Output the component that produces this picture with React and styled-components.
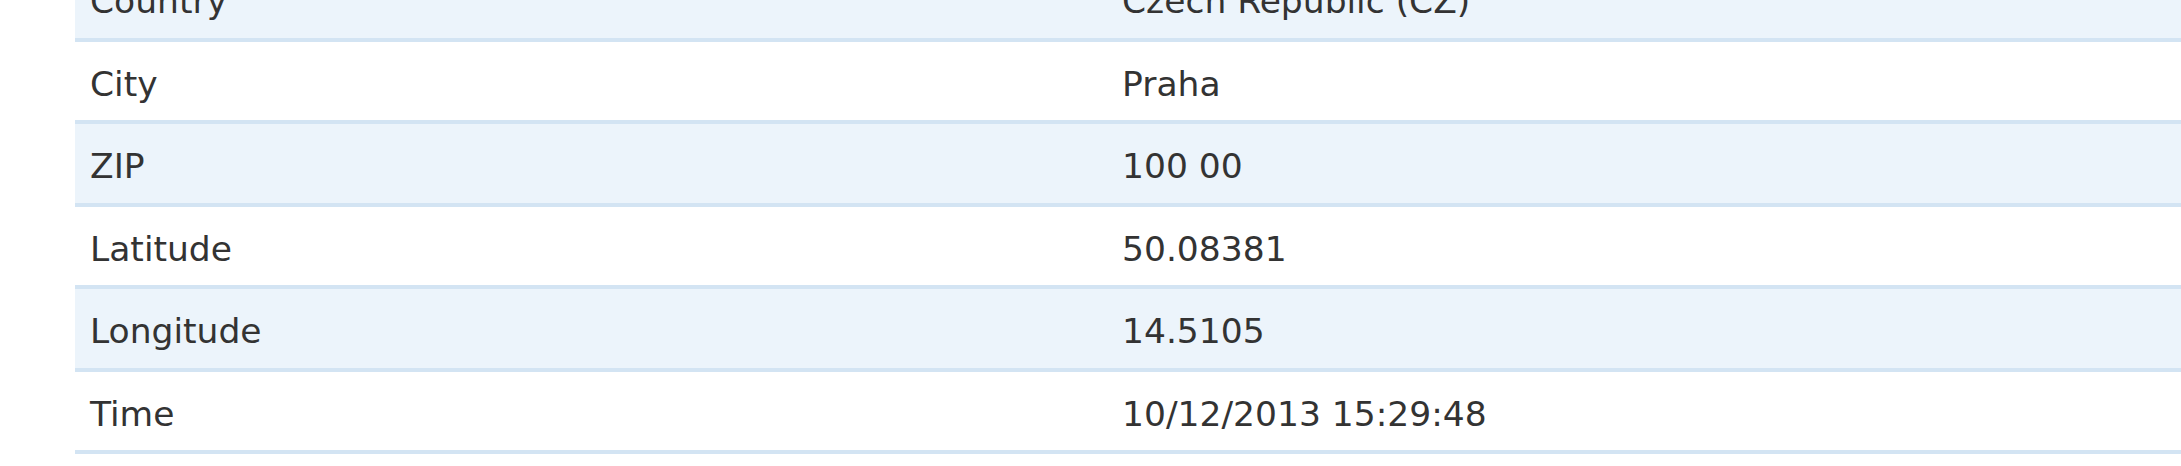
import React from "react";
import styled, { createGlobalStyle } from "styled-components";

const Global = createGlobalStyle`
  html, body {
    margin: 0;
    padding: 0;
    background: #ffffff;
    overflow: hidden;
  }
  body {
    font-family: "DejaVu Sans", Verdana, sans-serif;
  }
`;

const Page = styled.div`
  height: 466px;
  overflow: hidden;
  background: #ffffff;
  padding-left: 75px;
`;

const Table = styled.div`
  margin-top: -41px;
  display: flex;
  flex-direction: column;
`;

const Row = styled.div`
  display: grid;
  grid-template-columns: 1032px 1fr;
  height: 78.5px;
  border-bottom: 4px solid #d3e4f3;
  background: ${(p) => (p.$shaded ? "#ecf4fb" : "#ffffff")};
`;

const Cell = styled.div`
  display: flex;
  align-items: center;
  padding: 6px 0 0 15px;
  font-size: 34.5px;
  color: #333333;
  white-space: nowrap;
`;

const rows = [
  ["Country", "Czech Republic (CZ)"],
  ["City", "Praha"],
  ["ZIP", "100 00"],
  ["Latitude", "50.08381"],
  ["Longitude", "14.5105"],
  ["Time", "10/12/2013 15:29:48"],
];

export default function App() {
  return (
    <>
      <Global />
      <Page>
        <Table>
          {rows.map(([label, value], i) => (
            <Row key={label} $shaded={i % 2 === 0}>
              <Cell>{label}</Cell>
              <Cell>{value}</Cell>
            </Row>
          ))}
        </Table>
      </Page>
    </>
  );
}
